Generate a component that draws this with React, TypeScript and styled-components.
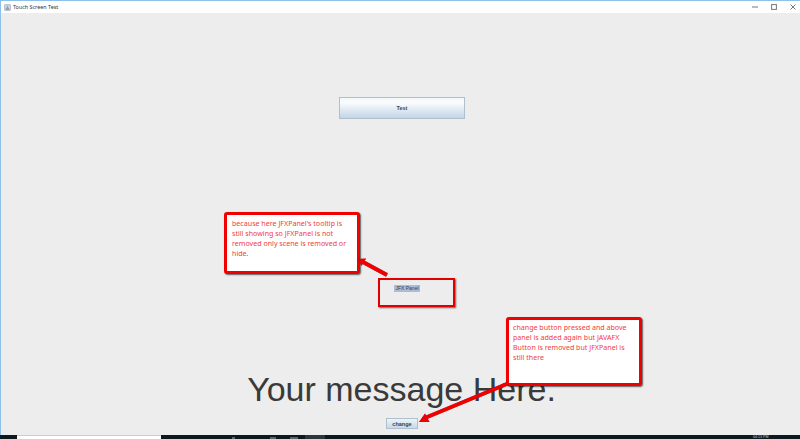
import styled, { createGlobalStyle } from 'styled-components'

const GlobalStyle = createGlobalStyle`
  html, body, #root {
    margin: 0;
    padding: 0;
    width: 800px;
    height: 439px;
    overflow: hidden;
  }
`

const App = () => {
  return (
    <Page>
      <GlobalStyle />
      <Window>
        <TitleBar>
          <AppIcon viewBox="0 0 8 8">
            <rect x="0.5" y="0.5" width="7" height="7" rx="1" fill="#c9d3e0" stroke="#8d9bb0" strokeWidth="0.6" />
            <path d="M4 1.5 L5.2 5 H2.8 Z" fill="#d9903a" />
            <rect x="2" y="5" width="4" height="1.6" fill="#7f93b4" />
          </AppIcon>
          <Title>Touch Screen Test</Title>
          <WindowControls>
            <svg width="6" height="6" viewBox="0 0 6 6">
              <path d="M0 3 H6" stroke="#777" strokeWidth="1" />
            </svg>
            <svg width="6" height="6" viewBox="0 0 6 6">
              <rect x="0.6" y="0.6" width="4.8" height="4.8" fill="none" stroke="#777" strokeWidth="1" />
            </svg>
            <svg width="6" height="6" viewBox="0 0 6 6">
              <path d="M0.5 0.5 L5.5 5.5 M5.5 0.5 L0.5 5.5" stroke="#777" strokeWidth="1" />
            </svg>
          </WindowControls>
        </TitleBar>
        <Content>
          <TestButton>Test</TestButton>
          <Message>Your message Here.</Message>
          <ChangeButton>change</ChangeButton>
        </Content>

        <PanelBox>
          <Tooltip>JFX Panel</Tooltip>
        </PanelBox>

        <TopCallout>
          because here JFXPanel's tooltip is still showing so JFXPanel is not removed only scene is removed or hide.
        </TopCallout>
        <BottomCallout>
          change button pressed and above panel is added again but JAVAFX Button is removed but JFXPanel is still there
        </BottomCallout>

        <ArrowLayer viewBox="0 0 800 439">
          <path d="M387 275 L363 262" stroke="#f00000" strokeWidth="4" />
          <path d="M358 259 L366 258.5 L361.5 266 Z" fill="#f00000" />
          <path d="M508 383.5 L426 417.5" stroke="#f00000" strokeWidth="3.6" />
          <path d="M419 422 L425 413.5 L429.5 422 Z" fill="#f00000" />
        </ArrowLayer>
      </Window>
      <Taskbar>
        <SearchBox />
        <TrayMark $left={232} $width={3} />
        <TrayMark $left={270} $width={6} />
        <TrayMark $left={290} $width={8} />
        <ActiveApp />
        <Clock>04:13 PM</Clock>
      </Taskbar>
    </Page>
  )
}

export default App


const Page = styled.div`
  display: flex;
  flex-direction: column;
  width: 800px;
  height: 439px;
  background: #ededed;
  font-family: "Liberation Sans", Arial, sans-serif;
`

const Window = styled.div`
  position: relative;
  display: flex;
  flex-direction: column;
  flex: 1;
  min-height: 0;
  border-top: 1px solid #8cc1e9;
  border-left: 1px solid #8cc1e9;
`

const TitleBar = styled.div`
  display: flex;
  align-items: center;
  height: 12px;
  padding-left: 3px;
  background: #ffffff;
`

const AppIcon = styled.svg`
  width: 7px;
  height: 7px;
  margin-right: 2px;
`

const Title = styled.div`
  font-family: "Noto Sans", sans-serif;
  font-size: 5.4px;
  color: #333333;
`

const WindowControls = styled.div`
  display: flex;
  gap: 13px;
  margin-left: auto;
  padding-right: 4px;
`

const Content = styled.div`
  display: flex;
  flex-direction: column;
  align-items: center;
  flex: 1;
  padding-top: 84px;
  background: #ededed;
`

const TestButton = styled.div`
  display: flex;
  align-items: center;
  justify-content: center;
  box-sizing: border-box;
  width: 126px;
  height: 22px;
  margin-left: 3px;
  border: 1px solid #b0bfcd;
  background: linear-gradient(#f2f7fb 0%, #fafcfe 25%, #dfe9f2 60%, #c3d5e6 100%);
  font-size: 5.5px;
  font-weight: 700;
  color: #45494f;
`

const Message = styled.div`
  margin-top: 250px;
  margin-left: 2px;
  font-size: 34px;
  line-height: 40px;
  color: #3a3a3a;
  white-space: nowrap;
`

const ChangeButton = styled.div`
  display: flex;
  align-items: center;
  justify-content: center;
  box-sizing: border-box;
  width: 32px;
  height: 11px;
  margin-top: 9px;
  margin-left: 3px;
  border: 1px solid #b0bfcd;
  background: linear-gradient(#eef4f9, #c7d8e8);
  font-size: 5.5px;
  font-weight: 700;
  color: #3c4147;
`

const Callout = styled.div`
  position: absolute;
  box-sizing: border-box;
  border: 3px solid #f00000;
  border-radius: 3px;
  background: #ffffff;
  box-shadow: 1px 1px 1.5px rgba(0, 0, 0, 0.6);
  font-family: "Noto Sans", sans-serif;
  font-size: 7.1px;
  line-height: 10px;
  color: #f23c3c;
`

const TopCallout = styled(Callout)`
  left: 223px;
  top: 211px;
  width: 136px;
  height: 62px;
  padding: 3px 5px;
`

const BottomCallout = styled(Callout)`
  left: 505px;
  top: 316px;
  width: 136px;
  height: 69px;
  padding: 2px 4px;
`

const PanelBox = styled.div`
  position: absolute;
  left: 377px;
  top: 277px;
  box-sizing: border-box;
  width: 77px;
  height: 29px;
  padding: 5px 14px;
  border: 2px solid #e00000;
  box-shadow: 1px 1px 1.5px rgba(0, 0, 0, 0.6);
`

const Tooltip = styled.div`
  width: 26px;
  height: 7px;
  background: #a9bcd8;
  font-size: 5px;
  line-height: 7px;
  text-align: center;
  white-space: nowrap;
  color: #3a4048;
`

const ArrowLayer = styled.svg`
  position: absolute;
  left: -1px;
  top: -1px;
  width: 800px;
  height: 439px;
  pointer-events: none;
  filter: drop-shadow(0.6px 0.6px 0.6px rgba(0, 0, 0, 0.5));
`

const Taskbar = styled.div`
  position: relative;
  flex: none;
  height: 4px;
  background: #0c1a20;
`

const SearchBox = styled.div`
  position: absolute;
  left: 17px;
  top: 0;
  box-sizing: border-box;
  width: 144px;
  height: 4px;
  background: #ffffff;
  border-top: 1px solid #cccccc;
`

const TrayMark = styled.div<{ $left: number; $width: number }>`
  position: absolute;
  left: ${(p) => p.$left}px;
  top: 2px;
  width: ${(p) => p.$width}px;
  height: 2px;
  background: #5a6468;
`

const ActiveApp = styled.div`
  position: absolute;
  left: 305px;
  top: 0;
  width: 20px;
  height: 4px;
  background: #2b373c;
`

const Clock = styled.div`
  position: absolute;
  left: 753px;
  top: 0;
  font-size: 3.6px;
  line-height: 4px;
  color: #c8cdd0;
  white-space: nowrap;
`
